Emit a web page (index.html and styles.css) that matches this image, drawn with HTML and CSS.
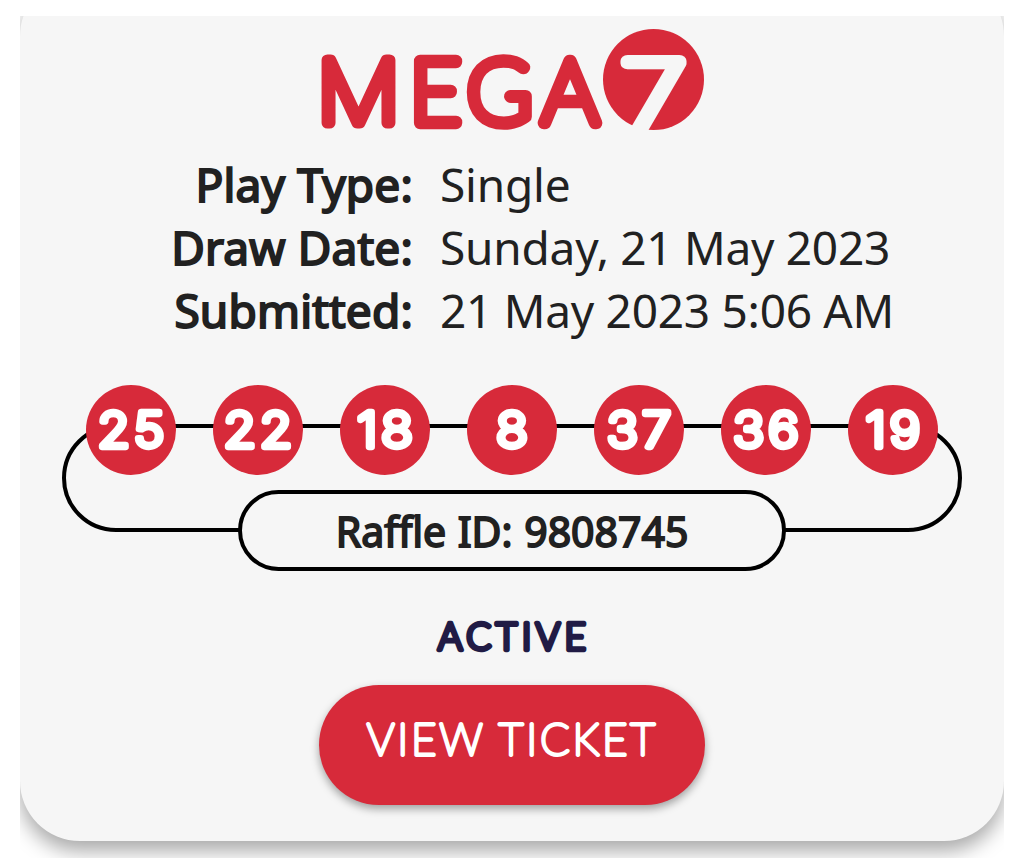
FILE: index.html
```html
<!DOCTYPE html>
<html lang="en">
<head>
  <meta charset="UTF-8" />
  <title>MEGA7 Ticket</title>
  <link rel="stylesheet" href="styles.css">
</head>
<body>
  <div class="slide">
    <div class="card">
      <svg class="logo" width="388" height="104" viewBox="0 0 388 104">
        <g class="logo-word">
          <text class="logo-m" x="-1" y="94.500" textLength="83" lengthAdjust="spacingAndGlyphs">M</text>
          <text x="92" y="94.500" textLength="51" lengthAdjust="spacingAndGlyphs">E</text>
          <text x="149" y="94.500" textLength="65" lengthAdjust="spacingAndGlyphs">G</text>
          <text x="224" y="94.500" textLength="56" lengthAdjust="spacingAndGlyphs">A</text>
        </g>
        <circle cx="335.500" cy="51.500" r="50.500" fill="#d72a3a" />
        <text class="logo-seven" x="302" y="108" textLength="67" lengthAdjust="spacingAndGlyphs">7</text>
      </svg>

      <div class="details">
        <div class="label">Play Type:</div>
        <div>Single</div>
        <div class="label">Draw Date:</div>
        <div>Sunday, 21 May 2023</div>
        <div class="label">Submitted:</div>
        <div>21 May 2023 5:06 AM</div>
      </div>

      <div class="track">
        <div class="balls">
          <svg class="ball" viewBox="0 0 90 90"><text x="45" y="62">25</text></svg>
          <svg class="ball" viewBox="0 0 90 90"><text x="45" y="62">22</text></svg>
          <svg class="ball" viewBox="0 0 90 90"><text x="45" y="62">18</text></svg>
          <svg class="ball" viewBox="0 0 90 90"><text x="45" y="62">8</text></svg>
          <svg class="ball" viewBox="0 0 90 90"><text x="45" y="62">37</text></svg>
          <svg class="ball" viewBox="0 0 90 90"><text x="45" y="62">36</text></svg>
          <svg class="ball" viewBox="0 0 90 90"><text x="45" y="62">19</text></svg>
        </div>
        <div class="raffle">Raffle ID: 9808745</div>
      </div>

      <svg class="status" width="160" height="56" viewBox="0 0 160 56">
        <text x="6" y="40" textLength="148">ACTIVE</text>
      </svg>

      <button class="view">
        <svg width="300" height="60" viewBox="0 0 300 60">
          <text x="5" y="46.500" textLength="288">VIEW TICKET</text>
        </svg>
      </button>
    </div>
  </div>
</body>
</html>
```

FILE: styles.css
```css
* {
  box-sizing: border-box;
}
body {
  margin: 0;
  padding: 16px 19px 0 20px;
  height: 858px;
  overflow: hidden;
  background: #fff;
  color: #212121;
  font-family: "Noto Sans", sans-serif;
}
.slide {
  height: 842px;
  overflow: hidden;
}
.card {
  display: flex;
  flex-direction: column;
  align-items: center;
  height: 865px;
  margin-top: -40px;
  padding-top: 52px;
  border-radius: 60px;
  background: #f6f6f6;
  box-shadow: 0 10px 20px rgba(0, 0, 0, 0.34);
}
.logo {
  display: block;
  flex: none;
  overflow: visible;
}
.logo-word {
  font-family: Lato, sans-serif;
  font-size: 88px;
  font-weight: 100;
  fill: #d72a3a;
  stroke: #d72a3a;
  stroke-width: 12.5px;
  stroke-linejoin: round;
}
.logo-m {
  font-family: Inter, sans-serif;
  font-size: 86px;
  stroke-width: 11px;
}
.logo-seven {
  font-family: Inter, sans-serif;
  font-size: 103px;
  font-weight: 100;
  fill: #f6f6f6;
  stroke: #f6f6f6;
  stroke-width: 12px;
  stroke-linejoin: round;
}
.details {
  display: grid;
  grid-template-columns: 393px 1fr;
  column-gap: 27px;
  width: 984px;
  margin-top: 21px;
  font-size: 46px;
  line-height: 62.8px;
  letter-spacing: -0.2px;
  word-spacing: -0.3px;
}
.label {
  text-align: right;
  letter-spacing: 0.2px;
  word-spacing: 0;
  -webkit-text-stroke: 2px #212121;
}
.track {
  width: 900px;
  height: 108px;
  flex: none;
  margin-top: 82.4px;
  padding: 0 20px;
  border: 4.5px solid #000;
  border-radius: 54px;
}
.balls {
  display: flex;
  justify-content: space-between;
  margin-top: -43px;
}
.ball {
  width: 90px;
  height: 90px;
  border-radius: 50%;
  background: #d72a3a;
}
.ball text {
  font-family: Inter, sans-serif;
  font-size: 48px;
  font-weight: 200;
  text-anchor: middle;
  letter-spacing: 4px;
  fill: #fff;
  stroke: #fff;
  stroke-width: 6.3px;
  stroke-linejoin: round;
  transform: translateX(-1.5px) scaleX(1.08);
}
.raffle {
  width: 548px;
  height: 81px;
  margin: 15px auto 0;
  border: 4.5px solid #000;
  border-radius: 41px;
  background: #f6f6f6;
  text-align: center;
  font-size: 41px;
  line-height: 74px;
  word-spacing: 1px;
  -webkit-text-stroke: 1.8px #212121;
}
.status {
  flex: none;
  margin-top: 78px;
  font-family: Lato, sans-serif;
  font-size: 37px;
  font-weight: 300;
  fill: #211b45;
  stroke: #211b45;
  stroke-width: 4.5px;
  stroke-linejoin: round;
}
.view {
  flex: none;
  width: 386px;
  height: 120px;
  margin-top: 19px;
  padding: 0 0 11px;
  border: none;
  border-radius: 60px;
  background: #d72a3a;
  box-shadow: 0 4px 8px rgba(0, 0, 0, 0.35);
  cursor: pointer;
}
.view svg {
  font-family: Lato, sans-serif;
  font-size: 43px;
  font-weight: 100;
  fill: #fff;
  stroke: #fff;
  stroke-width: 3.8px;
  stroke-linejoin: round;
}
```
